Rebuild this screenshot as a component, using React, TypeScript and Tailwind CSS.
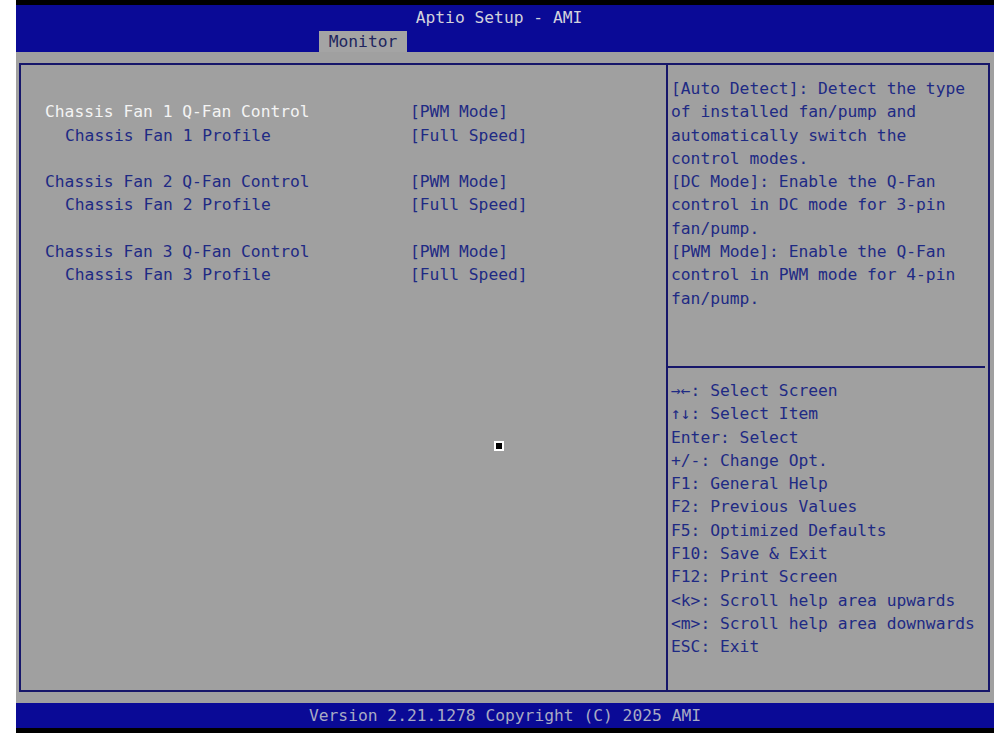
import React from 'react';

const mono = { fontFamily: '"DejaVu Sans Mono", "Liberation Mono", monospace' };

interface Row {
  label: string;
  value: string;
  sub?: boolean;
  active?: boolean;
}

const rows: (Row | null)[] = [
  null,
  { label: 'Chassis Fan 1 Q-Fan Control', value: '[PWM Mode]', active: true },
  { label: 'Chassis Fan 1 Profile', value: '[Full Speed]', sub: true },
  null,
  { label: 'Chassis Fan 2 Q-Fan Control', value: '[PWM Mode]' },
  { label: 'Chassis Fan 2 Profile', value: '[Full Speed]', sub: true },
  null,
  { label: 'Chassis Fan 3 Q-Fan Control', value: '[PWM Mode]' },
  { label: 'Chassis Fan 3 Profile', value: '[Full Speed]', sub: true },
];

const helpText = [
  '[Auto Detect]: Detect the type',
  'of installed fan/pump and',
  'automatically switch the',
  'control modes.',
  '[DC Mode]: Enable the Q-Fan',
  'control in DC mode for 3-pin',
  'fan/pump.',
  '[PWM Mode]: Enable the Q-Fan',
  'control in PWM mode for 4-pin',
  'fan/pump.',
];

const keys = [
  '→←: Select Screen',
  '↑↓: Select Item',
  'Enter: Select',
  '+/-: Change Opt.',
  'F1: General Help',
  'F2: Previous Values',
  'F5: Optimized Defaults',
  'F10: Save & Exit',
  'F12: Print Screen',
  '<k>: Scroll help area upwards',
  '<m>: Scroll help area downwards',
  'ESC: Exit',
];

export default function App() {
  return (
    <div className="w-[1000px] h-[733px] bg-white flex text-[16.3px] leading-[23.3px]" style={mono}>
      <div className="w-[16px] shrink-0" />
      <div className="w-[978px] flex flex-col relative">
        <div className="h-[5px] bg-black" />
        {/* header */}
        <div className="h-[47px] bg-[#0a0a96] flex flex-col">
          <div className="h-[26px] flex items-center justify-center text-[#d2d2dc] pr-[12px]">Aptio Setup - AMI</div>
          <div className="flex pl-[303px]">
            <div className="h-[21px] w-[88px] bg-[#a4a4a4] text-[#20245e] flex items-center justify-center">Monitor</div>
          </div>
        </div>
        {/* body */}
        <div className="flex-1 bg-[#a0a0a0] pt-[11px] pb-[11px] pl-[3px] pr-[4px] flex">
          <div className="flex-1 border-2 border-[#16166a] flex">
            <div className="w-[645px] pl-[24px] pt-[12px]">
              {rows.map((r, i) =>
                r ? (
                  <div key={i} className="flex h-[23.3px]">
                    <div className={`w-[365px] ${r.sub ? 'pl-[20px]' : ''} ${r.active ? 'text-[#f4f4f4]' : 'text-[#1e2a84]'}`}>
                      {r.label}
                    </div>
                    <div className="text-[#1e2a84]">{r.value}</div>
                  </div>
                ) : (
                  <div key={i} className="h-[23.3px]" />
                )
              )}
            </div>
            <div className="w-[2px] bg-[#16166a]" />
            <div className="flex-1 flex flex-col">
              <div className="h-[301px] pl-[3px] pt-[12px] text-[#1e2a84] whitespace-pre">
                {helpText.map((t, i) => (
                  <div key={i}>{t}</div>
                ))}
              </div>
              <div className="h-[2px] bg-[#16166a] mr-[3px]" />
              <div className="pl-[3px] pt-[11px] text-[#1e2a84] whitespace-pre">
                {keys.map((t, i) => (
                  <div key={i}>{t}</div>
                ))}
              </div>
            </div>
          </div>
        </div>
        {/* footer */}
        <div className="h-[25px] bg-[#0a0a96] flex items-center justify-center text-[#a8aac4]">
          Version 2.21.1278 Copyright (C) 2025 AMI
        </div>
        <div className="h-[5px] bg-black" />
        {/* mouse cursor */}
        <div className="absolute left-[478px] top-[441px] w-[10px] h-[10px] bg-white p-[2px]">
          <div className="w-full h-full bg-black" />
        </div>
      </div>
      <div className="flex-1" />
    </div>
  );
}
